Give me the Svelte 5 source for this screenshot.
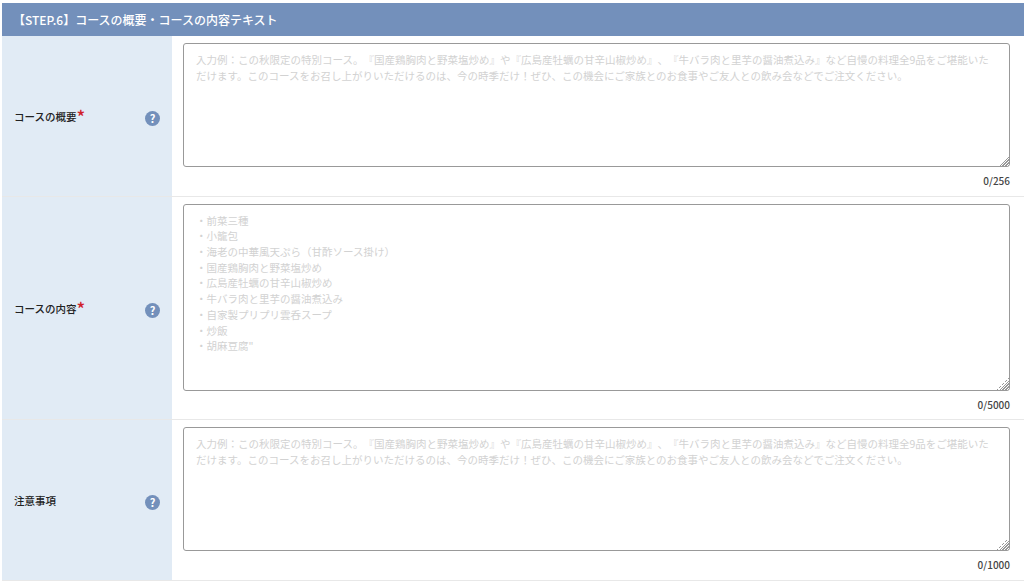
<script>
    const sample = '入力例：この秋限定の特別コース。『国産鶏胸肉と野菜塩炒め』や『広島産牡蠣の甘辛山椒炒め』、『牛バラ肉と里芋の醤油煮込み』など自慢の料理全9品をご堪能いただけます。このコースをお召し上がりいただけるのは、今の時季だけ！ぜひ、この機会にご家族とのお食事やご友人との飲み会などでご注文ください。';
    const menu = '・前菜三種\n・小籠包\n・海老の中華風天ぷら（甘酢ソース掛け）\n・国産鶏胸肉と野菜塩炒め\n・広島産牡蠣の甘辛山椒炒め\n・牛バラ肉と里芋の醤油煮込み\n・自家製プリプリ雲呑スープ\n・炒飯\n・胡麻豆腐"';

    const rows = [
        { label: 'コースの概要', required: true, placeholder: sample, count: '0/256', size: 'small' },
        { label: 'コースの内容', required: true, placeholder: menu, count: '0/5000', size: 'large' },
        { label: '注意事項', required: false, placeholder: sample, count: '0/1000', size: 'small' }
    ];
</script>

<main>
    <h2>【STEP.6】コースの概要・コースの内容テキスト</h2>
    {#each rows as row}
        <section class="row">
            <div class="head">
                <span class="label">{row.label}{#if row.required}<em>*</em>{/if}</span>
                <span class="help">?</span>
            </div>
            <div class="body">
                <textarea class={row.size} placeholder={row.placeholder}></textarea>
                <p>{row.count}</p>
            </div>
        </section>
    {/each}
</main>

<style>
:global(body) {
    background: #fff;
}
main {
    padding: 3px 0 0 2px;
    font-family: "Noto Sans CJK JP", "Noto Sans", sans-serif;
    color: #333;
    text-spacing-trim: space-all;
}
h2 {
    margin: 0;
    height: 33px;
    padding-left: 11px;
    background: #7390bb;
    color: #fff;
    font-size: 12px;
    font-weight: 500;
    line-height: 33px;
}
.row {
    display: flex;
    border-bottom: 1px solid #e8e8e8;
}
.head {
    width: 170px;
    flex: none;
    box-sizing: border-box;
    padding: 0 12px;
    background: #e1ebf5;
    display: flex;
    align-items: center;
    justify-content: space-between;
}
.label {
    padding-top: 2px;
    font-size: 10.5px;
    font-weight: 500;
    color: #222;
}
em {
    color: #d0202a;
    font-style: normal;
    font-size: 18px;
    line-height: 10px;
    vertical-align: -3px;
}
.help {
    width: 15px;
    height: 15px;
    margin-top: 5px;
    border-radius: 50%;
    background: #7390bb;
    color: #fff;
    font-size: 11px;
    font-weight: 700;
    line-height: 15px;
    text-align: center;
}
.body {
    flex: 1;
    padding: 7px 14px 0 11px;
}
textarea {
    display: block;
    width: 100%;
    box-sizing: border-box;
    padding: 8px 12px;
    border: 1px solid #999;
    border-radius: 3px;
    background: #fff;
    font-family: inherit;
    font-size: 10.5px;
    line-height: 15.7px;
}
textarea::placeholder {
    color: #d2d2d2;
    opacity: 1;
}
textarea::-webkit-resizer {
    background:
        linear-gradient(135deg, #fff 50%, transparent 50%),
        repeating-linear-gradient(135deg, #999 0 1px, #fff 1px 2px);
    background-size: 12px 12px;
    background-position: right bottom;
    background-repeat: no-repeat;
}
.small {
    height: 124px;
}
.large {
    height: 187px;
}
p {
    margin: 0;
    height: 28.6px;
    font-size: 10px;
    font-weight: 500;
    line-height: 27px;
    text-align: right;
    color: #444;
}
</style>
